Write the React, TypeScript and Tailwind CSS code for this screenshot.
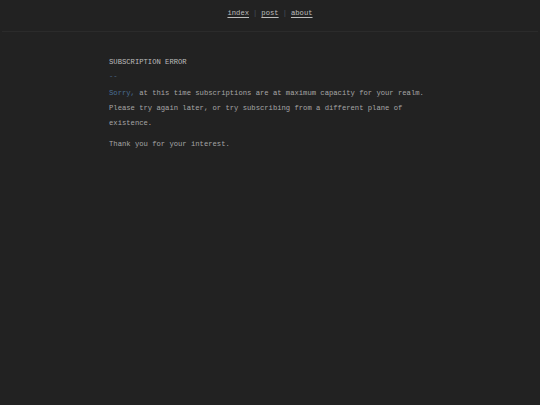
export default function App() {
  return (
    <div
      className="min-h-[405px] bg-[#222222] text-[#a6a6a6] text-[7.2px] antialiased"
      style={{ fontFamily: '"Liberation Mono", "DejaVu Sans Mono", monospace' }}
    >
      <header className="h-[31px] flex justify-center pt-[8px]">
        <nav className="flex gap-[4px] leading-[10px] text-[#bdbdbd]">
          <a className="underline underline-offset-2" href="#">index</a>
          <span className="text-[#45525e]">|</span>
          <a className="underline underline-offset-2" href="#">post</a>
          <span className="text-[#45525e]">|</span>
          <a className="underline underline-offset-2" href="#">about</a>
        </nav>
      </header>
      <div className="mx-[2px] h-px bg-[#2b2b2b]" />
      <main className="w-[322px] mx-auto pt-[24px]">
        <h1 className="leading-[12px] text-[#bdbdbd]">SUBSCRIPTION ERROR</h1>
        <div className="leading-[12px] mt-[2px] text-[#4a6684]">--</div>
        <p className="leading-[15px] mt-[4px]">
          <span className="text-[#4a6f94]">Sorry,</span> at this time subscriptions are at maximum capacity for your realm. Please try again later, or try subscribing from a different plane of existence.
        </p>
        <p className="leading-[15px] mt-[6px]">Thank you for your interest.</p>
      </main>
    </div>
  );
}
